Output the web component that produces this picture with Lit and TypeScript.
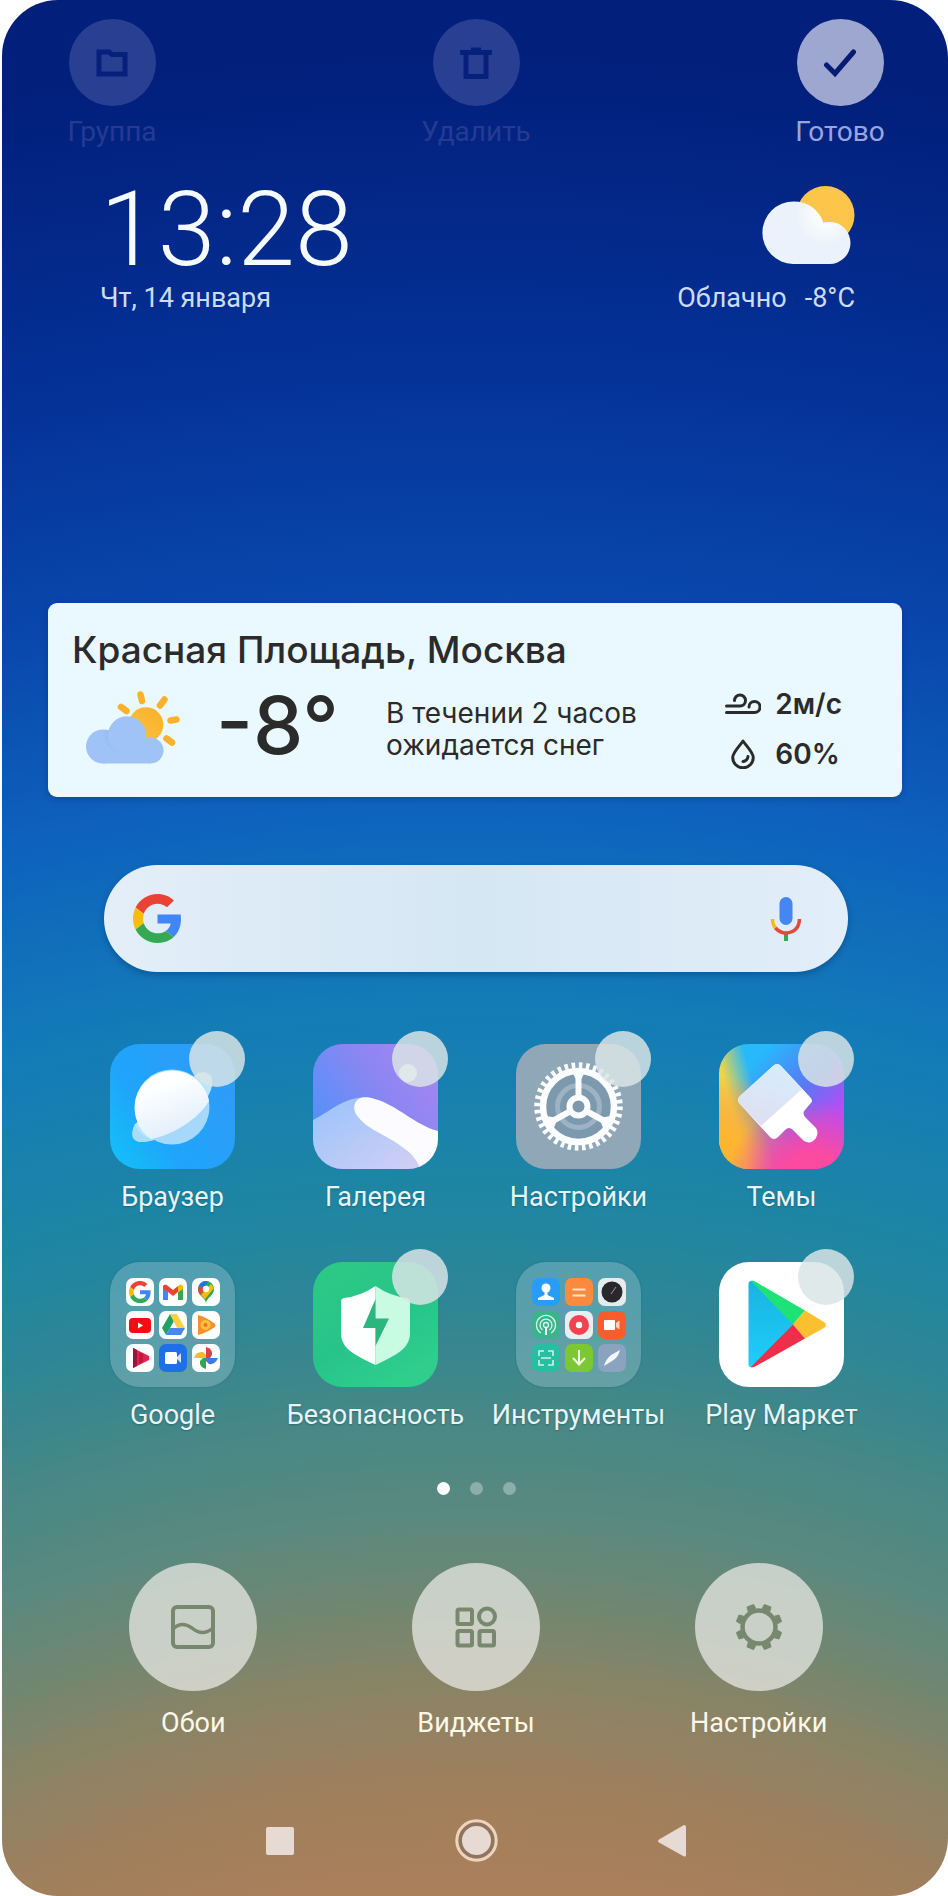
import { LitElement, html, svg, css, nothing, TemplateResult, SVGTemplateResult } from "lit";
import { customElement, property, state } from "lit/decorators.js";
import { classMap } from "lit/directives/class-map.js";

const googleG = svg`
  <path fill="#EA4335" d="M24 9.5c3.54 0 6.71 1.22 9.21 3.6l6.85-6.85C35.9 2.38 30.47 0 24 0 14.62 0 6.51 5.38 2.56 13.22l7.98 6.19C12.43 13.72 17.74 9.5 24 9.5z"/>
  <path fill="#4285F4" d="M46.98 24.55c0-1.57-.15-3.09-.38-4.55H24v9.02h12.94c-.58 2.96-2.26 5.48-4.78 7.18l7.73 6c4.51-4.18 7.09-10.36 7.09-17.65z"/>
  <path fill="#FBBC05" d="M10.53 28.59c-.48-1.45-.76-2.99-.76-4.59s.27-3.14.76-4.59l-7.98-6.19C.92 16.46 0 20.12 0 24c0 3.88.92 7.54 2.56 10.78l7.97-6.19z"/>
  <path fill="#34A853" d="M24 48c6.48 0 11.93-2.13 15.89-5.81l-7.73-6c-2.15 1.45-4.92 2.3-8.16 2.3-6.26 0-11.57-4.22-13.47-9.91l-7.98 6.19C6.51 42.62 14.62 48 24 48z"/>`;

const browserArt = svg`
  <defs>
    <linearGradient id="br-bg" x1="0" y1="1" x2="1" y2="0.3">
      <stop offset="0" stop-color="#12c3f8"/><stop offset="0.4" stop-color="#1fa5fb"/><stop offset="1" stop-color="#2f9bf8"/>
    </linearGradient>
    <linearGradient id="br-ball" x1="0.3" y1="0" x2="0.7" y2="1">
      <stop offset="0.2" stop-color="#fff"/><stop offset="1" stop-color="#dcecfb"/>
    </linearGradient>
  </defs>
  <rect width="125" height="125" fill="url(#br-bg)"/>
  <path d="M25 80C19 92 23 99 34 98C60 96 98 63 102 42C104 31 98 26 88 29Z" fill="#b9e6fd"/>
  <circle cx="62" cy="63" r="37.500" fill="#a5d8fb"/>
  <path d="M99 57A37.500 37.500 0 1 0 41 95C60 92 88 76 99 57Z" fill="url(#br-ball)"/>
  <path d="M25 80C28 88 34 93 41 95C38 98 33 98 30 98C22 97 21 89 25 80Z" fill="#a5dcfa"/>`;

const galleryArt = svg`
  <defs>
    <linearGradient id="ga-sky" x1="0" y1="0.7" x2="0.9" y2="0.1">
      <stop offset="0" stop-color="#4f92f8"/><stop offset="0.6" stop-color="#8b86f3"/><stop offset="1" stop-color="#a585ee"/>
    </linearGradient>
    <linearGradient id="ga-hill" x1="0" y1="0" x2="1" y2="1">
      <stop offset="0" stop-color="#98c3fa"/><stop offset="1" stop-color="#d3cff5"/>
    </linearGradient>
  </defs>
  <rect width="125" height="125" fill="url(#ga-sky)"/>
  <circle cx="95" cy="29" r="9" fill="#fff"/>
  <path d="M0 76C18 67 30 54 50 53.500L110 110V125H0Z" fill="url(#ga-hill)"/>
  <path d="M49 53.500C40 56 39 66 45 73C55 86 76 92 92 105C99 110 105 117 107 125H125V87C102 81 84 61 62 55C57 53 53 53 49 53.500Z" fill="#fcfbff"/>`;

const settingsArt = svg`
  <rect width="125" height="125" fill="#90a7b8"/>
  <circle cx="62.500" cy="62.500" r="34" fill="#7c99ad"/>
  <circle cx="62.500" cy="62.500" r="21" fill="none" stroke="#9db3c3" stroke-width="5"/>
  <circle cx="62.500" cy="62.500" r="41" fill="none" stroke="#fbfdfe" stroke-width="6.500" stroke-dasharray="3.560 3.596"/>
  <circle cx="62.500" cy="62.500" r="35.500" fill="none" stroke="#fbfdfe" stroke-width="6.500"/>
  <path d="M62.500 52V28M53 68L33 79M72 68L92 79" stroke="#fbfdfe" stroke-width="6"/>
  <path d="M56 28L62.500 40L69 28ZM30 72L42 74L37 86ZM95 72L83 74L88 86Z" fill="#fbfdfe"/>
  <circle cx="62.500" cy="62.500" r="9" fill="#7c99ad" stroke="#fbfdfe" stroke-width="6"/>`;

const themesArt = svg`
  <defs>
    <linearGradient id="th-base" x1="0.3" y1="0" x2="0.9" y2="0.6">
      <stop offset="0.1" stop-color="#27b9fa"/><stop offset="0.6" stop-color="#5a78f5"/><stop offset="1" stop-color="#b64cf6"/>
    </linearGradient>
    <radialGradient id="th-pink" cx="0.75" cy="1.15" r="0.7">
      <stop offset="0.4" stop-color="#fb4aa0"/><stop offset="1" stop-color="#fb4aa0" stop-opacity="0"/>
    </radialGradient>
    <radialGradient id="th-org" cx="0" cy="0.85" r="0.6">
      <stop offset="0.2" stop-color="#fdb52f"/><stop offset="1" stop-color="#fd8b50" stop-opacity="0"/>
    </radialGradient>
    <linearGradient id="th-yel" x1="0" y1="0.5" x2="0.3" y2="0.42">
      <stop offset="0.3" stop-color="#f0d545"/><stop offset="1" stop-color="#f0d545" stop-opacity="0"/>
    </linearGradient>
    <linearGradient id="th-br" x1="0.7" y1="0" x2="0.3" y2="1">
      <stop offset="0" stop-color="#d6edfc"/><stop offset="1" stop-color="#dfdff0"/>
    </linearGradient>
  </defs>
  <rect width="125" height="125" fill="url(#th-base)"/>
  <rect width="125" height="125" fill="url(#th-yel)"/>
  <rect width="125" height="125" fill="url(#th-org)"/>
  <rect width="125" height="125" fill="url(#th-pink)"/>
  <path d="M54 22Q58 18 62 22L91 53Q95 57 91 60L86 66Q83 69 86 73L97 84Q100 88 97 94Q92 101 85 97L74 86Q70 82 66 86L59 93Q55 97 51 93L21 60Q17 56 21 52Z" fill="#fff"/>
  <path d="M54 22Q58 18 62 22L83 45L42 82L21 60Q17 56 21 52Z" fill="url(#th-br)"/>`;

const securityArt = svg`
  <defs>
    <linearGradient id="se-bg" x1="0" y1="0" x2="0.6" y2="1">
      <stop offset="0" stop-color="#2cca83"/><stop offset="0.6" stop-color="#27c48a"/><stop offset="1" stop-color="#2fce8c"/>
    </linearGradient>
  </defs>
  <rect width="125" height="125" fill="url(#se-bg)"/>
  <path d="M62.500 24Q48 34 31 36Q28 36.500 28 40V71C28 87 42 93 62.500 103Z" fill="#fdfffe"/>
  <path d="M62.500 24Q77 34 94 36Q97 36.500 97 40V71C97 87 83 93 62.500 103Z" fill="#c9fbe2"/>
  <path d="M62.500 37L50 66H62.500V84L76 56.500H62.500Z" fill="#2bb67d"/>`;

const playArt = svg`
  <defs>
    <linearGradient id="pl-blue" x1="0" y1="0" x2="0" y2="1">
      <stop offset="0" stop-color="#19b4e0"/><stop offset="1" stop-color="#1fcdfb"/>
    </linearGradient>
  </defs>
  <rect width="125" height="125" fill="#fff"/>
  <path d="M29.500 22Q30 18 34 19L75 62L34 105Q30 106 29.500 102Z" fill="url(#pl-blue)"/>
  <path d="M32 19Q34 18 37 20L86 48.500L74 62.500Z" fill="#1fe276"/>
  <path d="M86 48.500L105 60Q109 63 105 66L86 76.500L74 62.500Z" fill="#fbc02f"/>
  <path d="M86 76.500L37 104Q34 106 32 105L74 62.500Z" fill="#ee2f4b"/>`;

/* Miniatures of a folder, each on a 28 by 28 field. */
const mini = (fill: string, art: SVGTemplateResult) => svg`<rect width="28" height="28" rx="7" fill=${fill}/>${art}`;

const googleFolder: SVGTemplateResult[] = [
  mini("#fff", svg`<g transform="translate(3 3) scale(.46)">${googleG}</g>`),
  mini("#fff", svg`<path d="M4 8V22H9V14Z" fill="#4285f4"/><path d="M24 8V22H19V14Z" fill="#34a853"/><path d="M4 11V8Q6 5 9 8L14 12L19 8V14L14 18L9 14Z" fill="#ea4335"/><path d="M19 8Q22 5 24 8V11L19 14.500Z" fill="#fbbc04"/>`),
  mini("#fff", svg`<path d="M14 25C13 19 6 18 6 11A8 8 0 0 1 14 3Z" fill="#34a853"/><path d="M14 3A8 8 0 0 1 22 11C22 18 15 19 14 25Z" fill="#34a853"/><path d="M8 6A8 8 0 0 1 14 3L16 3.500L9 13L6 11Z" fill="#1a73e8"/><path d="M6 10L10 8L12 12L8 17Q6 14 6 10Z" fill="#ea4335"/><path d="M9 17L19 6L22 10L13 21Z" fill="#fbbc04"/><circle cx="14" cy="11" r="3.200" fill="#fff"/>`),
  mini("#fff", svg`<rect x="3" y="7" width="22" height="15" rx="4" fill="#f20d12"/><path d="M12 11.500V17.500L17 14.500Z" fill="#fff"/>`),
  mini("#fff", svg`<path d="M11 3L3 17L7 24L15 10Z" fill="#1ea362"/><path d="M11 3H18L26 17H18Z" fill="#ffcf48"/><path d="M7 24H22L26 17H11Z" fill="#4687f4"/>`),
  mini("#fff", svg`<path d="M6 4Q14 6 23 13Q24 14.500 23 16Q14 22 6 24Z" fill="#f78f2d"/><circle cx="13.500" cy="14" r="5" fill="#fbc23b"/><circle cx="13.500" cy="14" r="2" fill="#f0712a"/>`),
  mini("#fff", svg`<path d="M7 4L23 12V16L7 24Z" fill="#e0234e"/><path d="M7 4L11 6V22L7 24Z" fill="#9c1440"/><path d="M13 8V20L17 18V10Z" fill="#c2183f"/>`),
  mini("#1f6fe8", svg`<rect x="6" y="8" width="12" height="12" rx="1.500" fill="#fff"/><path d="M18 13L22 9V19L18 15Z" fill="#cfe2fc"/>`),
  mini("#fff", svg`<path d="M14 14V3Q21 5 20 11L18 14Z" fill="#d8433b"/><path d="M14 14H26Q23 21 17 20L14 17Z" fill="#3f78e8"/><path d="M14 14V25Q7 23 8 17L11 14Z" fill="#2fa556"/><path d="M14 14H2Q4 7 11 8L14 11Z" fill="#f6b931"/>`),
];

const toolsFolder: SVGTemplateResult[] = [
  mini("#279df8", svg`<circle cx="14" cy="10" r="4.500" fill="#fff"/><path d="M12.500 13H15.500V17L22 20V22H6V20L12.500 17Z" fill="#fff"/>`),
  mini("#fb8a3c", svg`<path d="M7.500 11.500H20.500M7.500 17.500H20.500" stroke="#ffe6d2" stroke-width="2"/>`),
  mini("#e6ebee", svg`<circle cx="14" cy="14" r="10.500" fill="#27272c"/><path d="M13 16L18 9" stroke="#b98f8c" stroke-width="1"/>`),
  mini("#3bb38c", svg`<g fill="none" stroke="#d8f6ea" stroke-width="1.300"><path d="M9 22A9.500 9.500 0 1 1 19 22"/><path d="M10.500 19A6 6 0 1 1 17.500 19"/><circle cx="14" cy="14" r="2.500"/></g><path d="M13 16H15V24H13Z" fill="#fff"/>`),
  mini("#e9eef2", svg`<circle cx="14" cy="14" r="10" fill="#f2414f"/><circle cx="14" cy="14" r="3.200" fill="#fff"/>`),
  mini("#fb5c2c", svg`<rect x="6" y="9" width="11" height="10" rx="1" fill="#fff"/><path d="M18 12L21.500 9.500V18.500L18 16Z" fill="#ffd0bd"/>`),
  mini("#26bfa1", svg`<path d="M7 12V7H12M16 7H21V12M7 16V21H12M16 21H21V16M9 14H19" fill="none" stroke="#c8f5e9" stroke-width="1.600"/>`),
  mini("#7cc832", svg`<path d="M14 6V20M8 14L14 20.500L20 14" fill="none" stroke="#f1fbe6" stroke-width="2"/>`),
  mini("#8ba3bf", svg`<path d="M22 6Q20 14 14 17L6 22Q8 15 13 11Z" fill="#f3f8fc"/>`),
];

interface AppItem {
  name: string;
  art?: SVGTemplateResult;
  folder?: SVGTemplateResult[];
}

const apps: AppItem[] = [
  { name: "Браузер", art: browserArt },
  { name: "Галерея", art: galleryArt },
  { name: "Настройки", art: settingsArt },
  { name: "Темы", art: themesArt },
  { name: "Google", folder: googleFolder },
  { name: "Безопасность", art: securityArt },
  { name: "Инструменты", folder: toolsFolder },
  { name: "Play Маркет", art: playArt },
];

@customElement("app-tile")
class AppTile extends LitElement {
  @property({ attribute: false }) item!: AppItem;

  static styles = css`
    :host { display: block; }
    .app {
      display: flex; flex-direction: column; align-items: center; gap: 12px;
      width: 100%; margin: 0; padding: 0; border: 0; background: none;
      font: 400 27px/32px Roboto, sans-serif; color: #e6f5f8; white-space: nowrap;
      text-shadow: 0 1px 2px rgba(0, 30, 50, .3); cursor: pointer;
    }
    .tile { position: relative; display: block; width: 125px; height: 125px; }
    .art { display: block; width: 125px; height: 125px; border-radius: 30px; }
    .folder {
      display: grid; grid-template-columns: repeat(3, 28px); gap: 5px;
      place-content: center; box-sizing: border-box;
      width: 125px; height: 125px; border-radius: 30px;
      background: rgba(200, 225, 235, .28);
      box-shadow: 0 0 2px rgba(0, 40, 60, .25);
    }
    .mini { display: block; width: 28px; height: 28px; }
    .pick {
      appearance: none; position: absolute; top: -13px; right: -10px;
      width: 56px; height: 56px; margin: 0; border-radius: 50%;
      background: rgba(218, 229, 230, .84); cursor: pointer;
    }
    .pick:checked { background: #fff; }
  `;

  render(): TemplateResult {
    const { name, art, folder } = this.item;
    if (folder) {
      return html`<button class="app" type="button">
        <span class="folder">${folder.map((m) => html`<svg class="mini" viewBox="0 0 28 28" aria-hidden="true">${m}</svg>`)}</span>
        <span>${name}</span>
      </button>`;
    }
    return html`<label class="app">
      <span class="tile">
        <svg class="art" viewBox="0 0 125 125" aria-hidden="true">${art}</svg>
        <input class="pick" type="checkbox">
      </span>
      <span>${name}</span>
    </label>`;
  }
}

@customElement("weather-card")
class WeatherCard extends LitElement {
  static styles = css`
    :host {
      display: block; box-sizing: border-box; padding: 25px 60px 11px 24px;
      border-radius: 9px; background: #eaf9ff; color: #2b2b2b;
      box-shadow: 0 2px 6px rgba(0, 20, 80, .25);
      font-family: Inter, sans-serif;
    }
    .place { margin: 0; font-size: 37px; line-height: 44px; font-weight: 500; }
    .now {
      display: grid; grid-template-columns: 130px 170px 1fr auto; align-items: center;
      padding-left: 14px; height: 114px; box-sizing: border-box;
    }
    .sky { display: block; width: 95px; height: 76px; }
    .temp { font-size: 80px; line-height: 80px; font-weight: 500; padding-bottom: 8px; }
    .note { margin: 0; font-size: 28px; line-height: 32px; font-weight: 400; }
    .facts {
      display: grid; grid-template-columns: 36px auto; gap: 16px 14px; margin: 0;
      align-items: center; justify-items: center;
      font-size: 28px; line-height: 34px; font-weight: 600;
    }
    .facts dt { display: flex; }
    .facts dd { margin: 0; justify-self: start; }
    .line { fill: none; stroke: #2b2b2b; stroke-width: 3; stroke-linecap: round; stroke-linejoin: round; }
  `;

  render(): TemplateResult {
    return html`
      <h2 class="place">Красная Площадь, Москва</h2>
      <div class="now">
        <svg class="sky" viewBox="0 0 95 76" role="img" aria-label="Переменная облачность">
          <defs>
            <linearGradient id="sun" x1="0" y1="1" x2="1" y2="0"><stop offset="0" stop-color="#fcc33f"/><stop offset="1" stop-color="#f9b12a"/></linearGradient>
            <radialGradient id="fold" cx="0.5" cy="0.5" r="0.5"><stop offset="0.7" stop-color="#7fa8e6" stop-opacity=".3"/><stop offset="1" stop-color="#7fa8e6" stop-opacity="0"/></radialGradient>
            <clipPath id="lobe"><circle cx="17" cy="55.500" r="17"/></clipPath>
          </defs>
          <g stroke="#fcb12b" stroke-width="6.500" stroke-linecap="round">
            <path d="M54.500 3.500L56 10M78.500 8.500L74 14.500M90.500 28.500L84.500 29.500M80.500 47.500L86 51.500M35 16L40.500 20"/>
          </g>
          <circle cx="60" cy="33.700" r="17.400" fill="url(#sun)"/>
          <g fill="#9fc3f7">
            <circle cx="17" cy="55.500" r="17"/><circle cx="64.500" cy="59.500" r="13"/>
            <path d="M17 50H64.500V72.500H17Z"/>
            <circle cx="38" cy="42" r="22" fill="url(#fold)" clip-path="url(#lobe)"/>
            <circle cx="41" cy="44.500" r="19.200"/>
          </g>
        </svg>
        <div class="temp">-8°</div>
        <p class="note">В течении 2 часов<br>ожидается снег</p>
        <dl class="facts">
          <dt><svg width="36" height="24" viewBox="0 0 36 24" role="img" aria-label="Ветер"><path class="line" d="M1.500 14H15A5.500 5.500 0 1 0 9.500 8.500M1.500 20.500H29.500A5.500 5.500 0 1 0 24 15"/></svg></dt>
          <dd>2м/с</dd>
          <dt><svg width="24" height="30" viewBox="0 0 24 30" role="img" aria-label="Влажность"><path class="line" d="M12 2C9 6.500 1.700 13.500 1.700 18.500A10.300 10.300 0 0 0 22.300 18.500C22.300 13.500 15 6.500 12 2ZM17 17.500A5.500 5.500 0 0 1 12 22.500"/></svg></dt>
          <dd>60%</dd>
        </dl>
      </div>`;
  }
}

const gearTeeth = Array.from({ length: 8 }, (_, i) => 22.5 + i * 45);

const actions = [
  {
    name: "Обои",
    icon: svg`<rect x="4" y="4" width="40" height="40" rx="4"/><path d="M4 26C10 20 16 20 23 25C30 31 37 31 44 25" stroke-width="3.400"/>`,
  },
  {
    name: "Виджеты",
    icon: svg`<rect x="5.500" y="6.500" width="14.500" height="14.500" rx="1.500"/><circle cx="35" cy="13.500" r="8"/><rect x="5.500" y="28" width="14.500" height="14.500" rx="1.500"/><rect x="27.500" y="28" width="14.500" height="14.500" rx="1.500"/>`,
  },
  {
    name: "Настройки",
    icon: svg`<circle cx="24" cy="24" r="16.500" stroke-width="4.500"/>${gearTeeth.map(
      (a) => svg`<path d="M20.500 5L21 1.500H27L27.500 5Z" fill="currentColor" stroke-width="2" transform="rotate(${a} 24 24)"/>`
    )}`,
  },
];

@customElement("app-root")
class AppRoot extends LitElement {
  @state() private page = 0;

  static styles = css`
    :host { display: block; padding-left: 2px; background: #fff; font-family: Roboto, sans-serif; }
    button { margin: 0; padding: 0; border: 0; background: none; font: inherit; color: inherit; cursor: pointer; }
    .screen {
      display: flex; flex-direction: column; box-sizing: border-box;
      min-height: 100vh; padding: 19px 0 34px 2px;
      border-radius: 56px 58px 58px 56px;
      background: radial-gradient(ellipse 300% 150% at 50% 150%,
        #ab8059 33%, #a17f5d 37%, #888466 41%, #6e8772 44%, #588980 47%, #488885 50%,
        #2f8694 54%, #1e86a3 58%, #137bb8 65%, #0e62bd 72%, #0948ad 79%, #043095 88%, #021f7b 98%);
    }
    .bar { display: flex; justify-content: space-between; padding: 0 48px; }
    .edit {
      display: flex; flex-direction: column; align-items: center; gap: 10px; width: 120px;
      font-size: 28px; line-height: 32px; color: #98a5df;
    }
    .edit:disabled { color: #253b93; cursor: default; }
    .round {
      display: flex; align-items: center; justify-content: center;
      width: 87px; height: 87px; border-radius: 50%; background: #9da7cf; color: #051c74;
    }
    .edit:disabled .round { background: #293f91; color: #06217c; }
    .glyph { display: block; fill: none; stroke: currentColor; stroke-width: 4; stroke-linejoin: round; }
    .edit .glyph { stroke-width: 5; stroke-linejoin: miter; }
    .status {
      display: flex; justify-content: space-between; align-items: flex-end;
      padding: 30px 93px 0 96px; color: #ccdcf6; font-size: 27px; line-height: 32px;
    }
    .time { font-size: 104px; line-height: 104px; font-weight: 300; color: #f6fbff; }
    .clock, .date { display: block; }
    .sky { display: flex; flex-direction: column; align-items: flex-end; gap: 18px; }
    .outside { display: flex; gap: 18px; }
    .card { margin: 289px 46px 0 44px; }
    .search {
      display: flex; align-items: center; box-sizing: border-box; height: 107px;
      margin: 68px 100px 0; padding: 0 46px 0 29px; border-radius: 54px;
      background: linear-gradient(90deg, #e3eef8, #d5e7f3 50%, #e2eef9);
      box-shadow: 0 3px 6px rgba(0, 40, 90, .35);
    }
    .query {
      flex: 1; min-width: 0; height: 64px; border: 0; outline: 0; background: none;
      font: 400 28px/32px Roboto, sans-serif; color: #1f2f40; padding: 0 16px;
    }
    .mark { display: block; }
    .apps { display: grid; grid-template-columns: repeat(4, minmax(0, 1fr)); row-gap: 49px; padding: 72px 65px 0 67px; }
    .dots { display: flex; justify-content: center; gap: 20px; padding-top: 51px; }
    .dot { width: 13px; height: 13px; border-radius: 50%; background: rgba(255, 255, 255, .32); }
    .dot.on { background: #fff; }
    .actions { display: grid; grid-template-columns: repeat(3, 1fr); padding: 68px 48px 0; justify-items: center; }
    .action {
      display: flex; flex-direction: column; align-items: center; gap: 16px;
      font-size: 27px; line-height: 32px; color: #fbf8ea;
    }
    .disc {
      display: flex; align-items: center; justify-content: center; width: 128px; height: 128px;
      border-radius: 50%; background: rgba(232, 232, 228, .75); color: #78886f;
    }
    .system {
      display: grid; grid-template-columns: repeat(3, 1fr); place-items: center;
      margin-top: auto; padding: 79px 178px 0;
    }
    .key { display: block; fill: #e6dad3; }
  `;

  render(): TemplateResult {
    return html`<main class="screen">
      <header class="bar">
        <button class="edit" type="button" disabled>
          <span class="round"><svg class="glyph" width="32" height="30" viewBox="0 0 32 30" aria-hidden="true"><path d="M3 4H13L16 6.500H29V26H3Z"/></svg></span>
          <span>Группа</span>
        </button>
        <button class="edit" type="button" disabled>
          <span class="round"><svg class="glyph" width="34" height="34" viewBox="0 0 34 34" aria-hidden="true"><path d="M1 6.500H33M12 4H22M7 6V30.500H27V6"/></svg></span>
          <span>Удалить</span>
        </button>
        <button class="edit" type="button">
          <span class="round"><svg class="glyph" width="34" height="30" viewBox="0 0 34 30" aria-hidden="true"><path d="M3.500 17L12 25.500L30.500 4" stroke-linecap="round"/></svg></span>
          <span>Готово</span>
        </button>
      </header>

      <section class="status">
        <div>
          <time class="clock time">13:28</time>
          <span class="date">Чт, 14 января</span>
        </div>
        <div class="sky">
          <svg class="mark" width="93" height="78" viewBox="0 0 93 78" aria-hidden="true">
            <defs>
              <clipPath id="cloud"><circle cx="31.700" cy="46.700" r="31.300"/><circle cx="67.500" cy="57" r="21"/><path d="M31 50H67.500V78H31Z"/></clipPath>
              <radialGradient id="glow"><stop offset="0.300" stop-color="#fbfcfb"/><stop offset="1" stop-color="#ebf2fb"/></radialGradient>
            </defs>
            <circle cx="63.500" cy="29" r="29" fill="#fdc64a"/>
            <g clip-path="url(#cloud)"><rect width="93" height="78" fill="#ebf2fb"/><circle cx="63.500" cy="29" r="30" fill="url(#glow)"/></g>
          </svg>
          <div class="outside"><span>Облачно</span><span>-8°C</span></div>
        </div>
      </section>

      <weather-card class="card"></weather-card>

      <form class="search" role="search">
        <svg class="mark" width="49" height="49" viewBox="0 0 48 48" aria-hidden="true">${googleG}</svg>
        <input class="query" type="text" aria-label="Поиск">
        <button type="button" aria-label="Голосовой поиск">
          <svg class="mark" width="32" height="46" viewBox="0 0 32 46" aria-hidden="true">
            <rect x="9.500" y="1" width="13" height="28" rx="6.500" fill="#4486f4"/>
            <path d="M16 37V45" stroke="#34a853" stroke-width="4"/>
            <g fill="none" stroke-width="3.500">
              <path d="M2.500 23Q2.500 29 6 32.500" stroke="#f6b81a"/>
              <path d="M5.500 32Q10 37 16 37Q29 36 29.500 23" stroke="#e5473c"/>
            </g>
          </svg>
        </button>
      </form>

      <section class="apps">${apps.map((item) => html`<app-tile .item=${item}></app-tile>`)}</section>

      <nav class="dots" aria-label="Экраны">
        ${[0, 1, 2].map(
          (n) => html`<button type="button" class=${classMap({ dot: true, on: n === this.page })}
            aria-label=${`Экран ${n + 1}`} aria-current=${n === this.page ? "page" : nothing} @click=${() => (this.page = n)}></button>`
        )}
      </nav>

      <section class="actions">
        ${actions.map(
          (a) => html`<button class="action" type="button">
            <span class="disc"><svg class="glyph" width="48" height="48" viewBox="0 0 48 48" aria-hidden="true">${a.icon}</svg></span>
            <span>${a.name}</span>
          </button>`
        )}
      </section>

      <nav class="system" aria-label="Навигация">
        <button type="button" aria-label="Недавние"><svg class="key" width="28" height="28" viewBox="0 0 28 28"><rect width="28" height="28" rx="2"/></svg></button>
        <button type="button" aria-label="Домой"><svg class="key" width="43" height="43" viewBox="0 0 43 43"><circle cx="21.500" cy="21.500" r="18" fill="#8d765f"/><circle cx="21.500" cy="21.500" r="14.500"/><circle cx="21.500" cy="21.500" r="19.700" fill="none" stroke="#f0d3bc" stroke-width="3"/></svg></button>
        <button type="button" aria-label="Назад"><svg class="key" width="28" height="32" viewBox="0 0 28 32"><path d="M26 0Q28 0 28 2V30Q28 32 26 31.500L1 17.500Q-1 16 1 14.500Z"/></svg></button>
      </nav>
    </main>`;
  }
}
